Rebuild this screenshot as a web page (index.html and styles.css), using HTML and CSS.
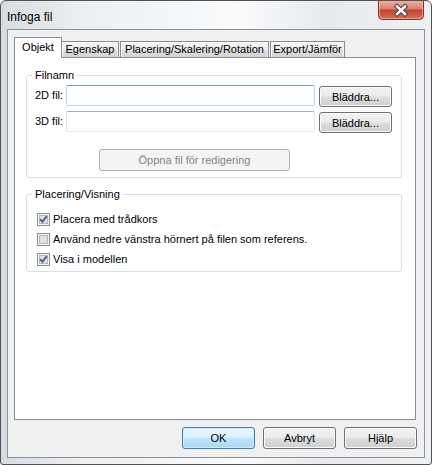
FILE: index.html
```html
<!DOCTYPE html>
<html lang="sv">
<head>
<meta charset="utf-8">
<title>Infoga fil</title>
<link rel="stylesheet" href="styles.css">
</head>
<body>
<div class="window">
  <div class="titlebar">
    <span class="title">Infoga fil</span>
    <svg class="close" width="46" height="19" viewBox="0 0 46 19">
      <defs>
        <linearGradient id="closeGrad" x1="0" y1="0" x2="0" y2="1">
          <stop offset="0" stop-color="#eab1a4"/>
          <stop offset="0.42" stop-color="#d9806d"/>
          <stop offset="0.5" stop-color="#c5432f"/>
          <stop offset="1" stop-color="#d9715a"/>
        </linearGradient>
      </defs>
      <path d="M0.5 0 V14.5 Q0.5 18.5 4.5 18.5 H41.5 Q45.5 18.5 45.5 14.5 V0" fill="url(#closeGrad)" stroke="#863226"/>
      <path d="M1.5 0 V14 Q1.5 17.5 5 17.5 H41 Q44.5 17.5 44.5 14 V0" fill="none" stroke="#f1c3b8" stroke-opacity="0.6"/>
      <path d="M19 5.5 L27 13 M27 5.5 L19 13" stroke="#4a4a4a" stroke-width="4.6" stroke-linecap="square"/>
      <path d="M19 5.5 L27 13 M27 5.5 L19 13" stroke="#ffffff" stroke-width="2.4" stroke-linecap="square"/>
    </svg>
  </div>
  <div class="frame">
    <div class="client">
      <div class="tabs">
        <div class="tab tab-active tab-objekt">Objekt</div>
        <div class="tab tab-egenskap">Egenskap</div>
        <div class="tab tab-placering">Placering/Skalering/Rotation</div>
        <div class="tab tab-export">Export/Jämför</div>
      </div>
      <div class="panel">
        <fieldset class="group group-files">
          <legend>Filnamn</legend>
          <div class="file-row">
            <span class="file-label">2D fil:</span>
            <input class="text-input text-input-hot" type="text">
            <button class="btn btn-browse" type="button">Bläddra...</button>
          </div>
          <div class="file-row file-row-next">
            <span class="file-label">3D fil:</span>
            <input class="text-input" type="text">
            <button class="btn btn-browse" type="button">Bläddra...</button>
          </div>
          <button class="btn btn-open" type="button" disabled>Öppna fil för redigering</button>
        </fieldset>
        <fieldset class="group group-place">
          <legend>Placering/Visning</legend>
          <div class="check-row check-row-first">
            <svg class="checkbox" width="13" height="13" viewBox="0 0 13 13">
              <rect x="0.5" y="0.5" width="12" height="12" fill="#f6f6f6" stroke="#8e8f8f"/>
              <rect x="2.5" y="2.5" width="8" height="8" fill="#dfe1e4" stroke="#b4b6b9"/>
              <path d="M3.2 6.2 L5.3 8.8 L9.8 3.2" fill="none" stroke="#4c5d8e" stroke-width="1.9"/>
            </svg>
            <span>Placera med trådkors</span>
          </div>
          <div class="check-row">
            <svg class="checkbox" width="13" height="13" viewBox="0 0 13 13">
              <rect x="0.5" y="0.5" width="12" height="12" fill="#f6f6f6" stroke="#8e8f8f"/>
              <rect x="2.5" y="2.5" width="8" height="8" fill="#dfe1e4" stroke="#b4b6b9"/>
            </svg>
            <span>Använd nedre vänstra hörnert på filen som referens.</span>
          </div>
          <div class="check-row">
            <svg class="checkbox" width="13" height="13" viewBox="0 0 13 13">
              <rect x="0.5" y="0.5" width="12" height="12" fill="#f6f6f6" stroke="#8e8f8f"/>
              <rect x="2.5" y="2.5" width="8" height="8" fill="#dfe1e4" stroke="#b4b6b9"/>
              <path d="M3.2 6.2 L5.3 8.8 L9.8 3.2" fill="none" stroke="#4c5d8e" stroke-width="1.9"/>
            </svg>
            <span>Visa i modellen</span>
          </div>
        </fieldset>
      </div>
      <div class="buttons">
        <button class="btn btn-dialog btn-default" type="button">OK</button>
        <button class="btn btn-dialog" type="button">Avbryt</button>
        <button class="btn btn-dialog" type="button">Hjälp</button>
      </div>
    </div>
  </div>
</div>
</body>
</html>
```
FILE: styles.css
```css
html, body {
  margin: 0;
  padding: 0;
  background: #ffffff;
}

body {
  font-family: "Liberation Sans", Arial, sans-serif;
  font-size: 11px;
  color: #000000;
}

.window {
  box-sizing: border-box;
  width: 432px;
  height: 465px;
  border: 1px solid #4f5358;
  border-radius: 6px 6px 3px 3px;
  background: linear-gradient(to right, #d8dce1 0%, #eceef0 18%, #f6f7f8 45%, #fbfbfc 55%, #e7e9ec 75%, #eef0f2 100%);
  display: flex;
  flex-direction: column;
  overflow: hidden;
}

.titlebar {
  height: 28px;
  flex-shrink: 0;
  display: flex;
  align-items: flex-start;
}

.title {
  font-size: 12px;
  line-height: 14px;
  padding: 9px 0 0 6px;
  color: #000000;
}

.close {
  display: block;
  margin-left: auto;
  margin-right: 7px;
}

.frame {
  flex: 1;
  display: flex;
  padding: 0 6px 6px 6px;
}

.client {
  flex: 1;
  border: 1px solid #89929c;
  background: #f0f0f0;
  padding: 7px 8px 0 6px;
  display: flex;
  flex-direction: column;
}

.tabs {
  display: flex;
  align-items: flex-end;
  height: 20px;
}

.tab {
  box-sizing: border-box;
  height: 16px;
  border: 1px solid #898c95;
  border-bottom: 0;
  line-height: 15px;
  text-align: center;
  white-space: nowrap;
  background: linear-gradient(to bottom, #f6f6f6 0%, #ececec 45%, #dedede 55%, #d4d4d4 100%);
  box-shadow: inset 1px 1px 0 #fbfbfb, inset -1px 0 0 #f3f3f3;
}

.tab-active {
  height: 21px;
  margin-bottom: -1px;
  line-height: 19px;
  background: #ffffff;
  box-shadow: none;
  position: relative;
  z-index: 1;
}

.tab-objekt { width: 48px; }
.tab-egenskap { width: 58px; margin-left: -1px; }
.tab-placering { width: 149px; margin-left: 1px; }
.tab-export { width: 75px; margin-left: 1px; }

.panel {
  box-sizing: border-box;
  height: 363px;
  border: 1px solid #898c95;
  background: #ffffff;
  padding: 11px 13px 0 11px;
}

.group {
  margin: 0;
  padding: 0 8px 6px 8px;
  border: 1px solid #d5dfe5;
  border-radius: 3px;
  min-width: 0;
}

.group legend {
  padding: 0 3px;
  margin-left: -3px;
  line-height: 13px;
  height: 13px;
}

.group-place {
  margin-top: 10px;
  padding-bottom: 2px;
}

.file-row {
  display: flex;
  align-items: flex-start;
  height: 21px;
  margin-top: 3px;
}

.file-row-next {
  margin-top: 5px;
}

.file-label {
  width: 31px;
  line-height: 21px;
  flex-shrink: 0;
}

.text-input {
  box-sizing: border-box;
  width: 249px;
  height: 21px;
  margin: 0;
  padding: 0 3px;
  font: inherit;
  background: #ffffff;
  border: 1px solid #e3e9ef;
  border-top-color: #abadb3;
  border-left-color: #dbdfe6;
  border-radius: 2px;
  outline: none;
}

.text-input-hot {
  border-color: #b6d3ec;
  border-top-color: #6ea1cf;
}

.btn {
  box-sizing: border-box;
  margin: 0;
  padding: 0;
  font: inherit;
  color: #000000;
  border: 1px solid #707070;
  border-radius: 3px;
  background: linear-gradient(to bottom, #f2f2f2 0%, #ebebeb 48%, #dddddd 52%, #cfcfcf 100%);
  box-shadow: inset 0 0 0 1px #fbfbfb;
  text-align: center;
  white-space: nowrap;
}

.btn-browse {
  width: 73px;
  height: 21px;
  margin-left: 4px;
  margin-top: 1px;
}

.btn-open {
  display: block;
  width: 191px;
  height: 22px;
  margin-top: 17px;
  margin-left: 64px;
  color: #838383;
  border-color: #adb2b5;
  background: #f4f4f4;
  box-shadow: none;
}

.check-row {
  display: flex;
  align-items: center;
  height: 20px;
}

.check-row-first {
  margin-top: 8px;
}

.checkbox {
  display: block;
  flex-shrink: 0;
  margin-left: 2px;
  margin-right: 3px;
}

.buttons {
  display: flex;
  justify-content: flex-end;
  gap: 8px;
  margin-top: 7px;
  margin-right: -1px;
}

.btn-dialog {
  width: 73px;
  height: 22px;
}

.btn-default {
  border-color: #3c7fb1;
  background: linear-gradient(to bottom, #eaf6fd 0%, #d9f0fc 48%, #bee6fd 52%, #a7d9f5 100%);
  box-shadow: inset 0 0 0 1px #d2ecfa;
}
```
